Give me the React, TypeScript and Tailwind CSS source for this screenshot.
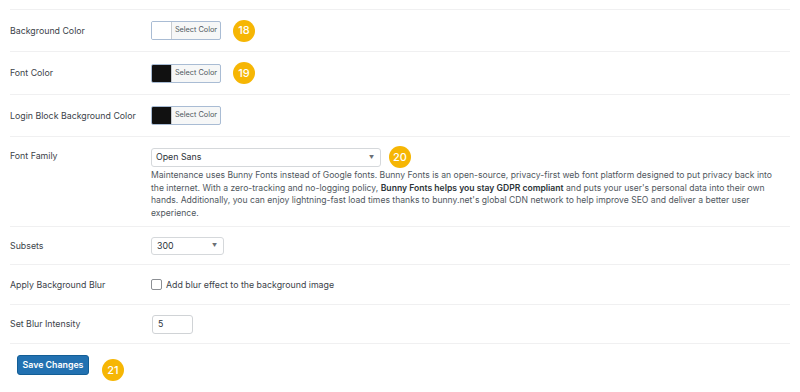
import React from "react";

const font = { fontFamily: "Inter, 'Noto Sans', sans-serif" };

function Badge({ n }: { n: number }) {
    return (
        <span className="flex h-[22px] w-[22px] items-center justify-center rounded-full bg-[#f6b604] text-[11px] font-medium text-white">
            {n}
        </span>
    );
}

function ColorPicker({ swatch }: { swatch: string }) {
    return (
        <div className="flex h-[19px] w-[70px] overflow-hidden rounded-[2px] border border-[#a9bcd4] bg-[#f6f7f7]">
            <span className={`w-[20px] border-r border-[#c8ccd0] ${swatch}`} />
            <span className="flex flex-1 items-center justify-center text-[7.3px] text-[#50575e]">Select Color</span>
        </div>
    );
}

function Row({ label, height, children }: { label: string; height: string; children: React.ReactNode }) {
    return (
        <div className={`flex items-center border-b border-[#f0f0f1] ${height}`}>
            <div className="w-[141px] shrink-0 text-[8.8px] text-[#3c434a]">{label}</div>
            <div className="flex items-center gap-[12px]">{children}</div>
        </div>
    );
}

function Caret() {
    return <span className="text-[5px] leading-none text-[#6b7075]">▼</span>;
}

export default function App() {
    return (
        <div className="h-[392px] w-[800px] bg-white px-[10px] pt-[9px]" style={font}>
            <div className="border-t border-[#f0f0f1]">
                <Row label="Background Color" height="h-[42px]">
                    <ColorPicker swatch="bg-white" />
                    <Badge n={18} />
                </Row>
                <Row label="Font Color" height="h-[43px]">
                    <ColorPicker swatch="bg-[#111111]" />
                    <Badge n={19} />
                </Row>
                <Row label="Login Block Background Color" height="h-[42px]">
                    <ColorPicker swatch="bg-[#111111]" />
                </Row>

                {/* Font family row has the long description under the select */}
                <div className="flex h-[90px] border-b border-[#f0f0f1] pt-[9px]">
                    <div className="flex h-[19px] w-[141px] shrink-0 items-center text-[8.8px] text-[#3c434a]">Font Family</div>
                    <div className="flex flex-col">
                        <div className="flex items-center gap-[8px]">
                            <div className="flex h-[19px] w-[230px] items-center justify-between rounded-[3px] border border-[#d5d8db] bg-white pl-[4px] pr-[6px] text-[8.8px] text-[#2c3338]">
                                Open Sans
                                <Caret />
                            </div>
                            <Badge n={20} />
                        </div>
                        <p className="mt-[1px] w-[636px] text-[8.6px] leading-[12.6px] text-[#50575e]">
                            Maintenance uses Bunny Fonts instead of Google fonts. Bunny Fonts is an open-source, privacy-first web font platform designed to put privacy back into the internet. With a zero-tracking and no-logging policy, <b className="font-semibold text-[#2c3338]">Bunny Fonts helps you stay GDPR compliant</b> and puts your user's personal data into their own hands. Additionally, you can enjoy lightning-fast load times thanks to bunny.net's global CDN network to help improve SEO and deliver a better user experience.
                        </p>
                    </div>
                </div>

                <Row label="Subsets" height="h-[38px]">
                    <div className="flex h-[18px] w-[73px] items-center justify-between rounded-[3px] border border-[#d5d8db] bg-white pl-[5px] pr-[6px] text-[8.8px] text-[#2c3338]">
                        300
                        <Caret />
                    </div>
                </Row>
                <Row label="Apply Background Blur" height="h-[40px]">
                    <label className="flex items-center gap-[4px] text-[8.8px] text-[#3c434a]">
                        <span className="h-[11px] w-[11px] rounded-[2px] border border-[#8c8f94] bg-white" />
                        Add blur effect to the background image
                    </label>
                </Row>
                <Row label="Set Blur Intensity" height="h-[39px]">
                    <div className="ml-[1px] flex h-[19px] w-[41px] items-center rounded-[3px] border border-[#d0d3d6] bg-white pl-[5px] text-[8.8px] text-[#2c3338]">
                        5
                    </div>
                </Row>
            </div>

            <div className="flex items-start gap-[13px] pl-[7px] pt-[11px]">
                <button className="h-[20px] w-[72px] rounded-[3px] border border-[#135e96] bg-[#2271b1] text-[8.8px] font-semibold text-white">
                    Save Changes
                </button>
                <span className="mt-[4px]">
                    <Badge n={21} />
                </span>
            </div>
        </div>
    );
}
